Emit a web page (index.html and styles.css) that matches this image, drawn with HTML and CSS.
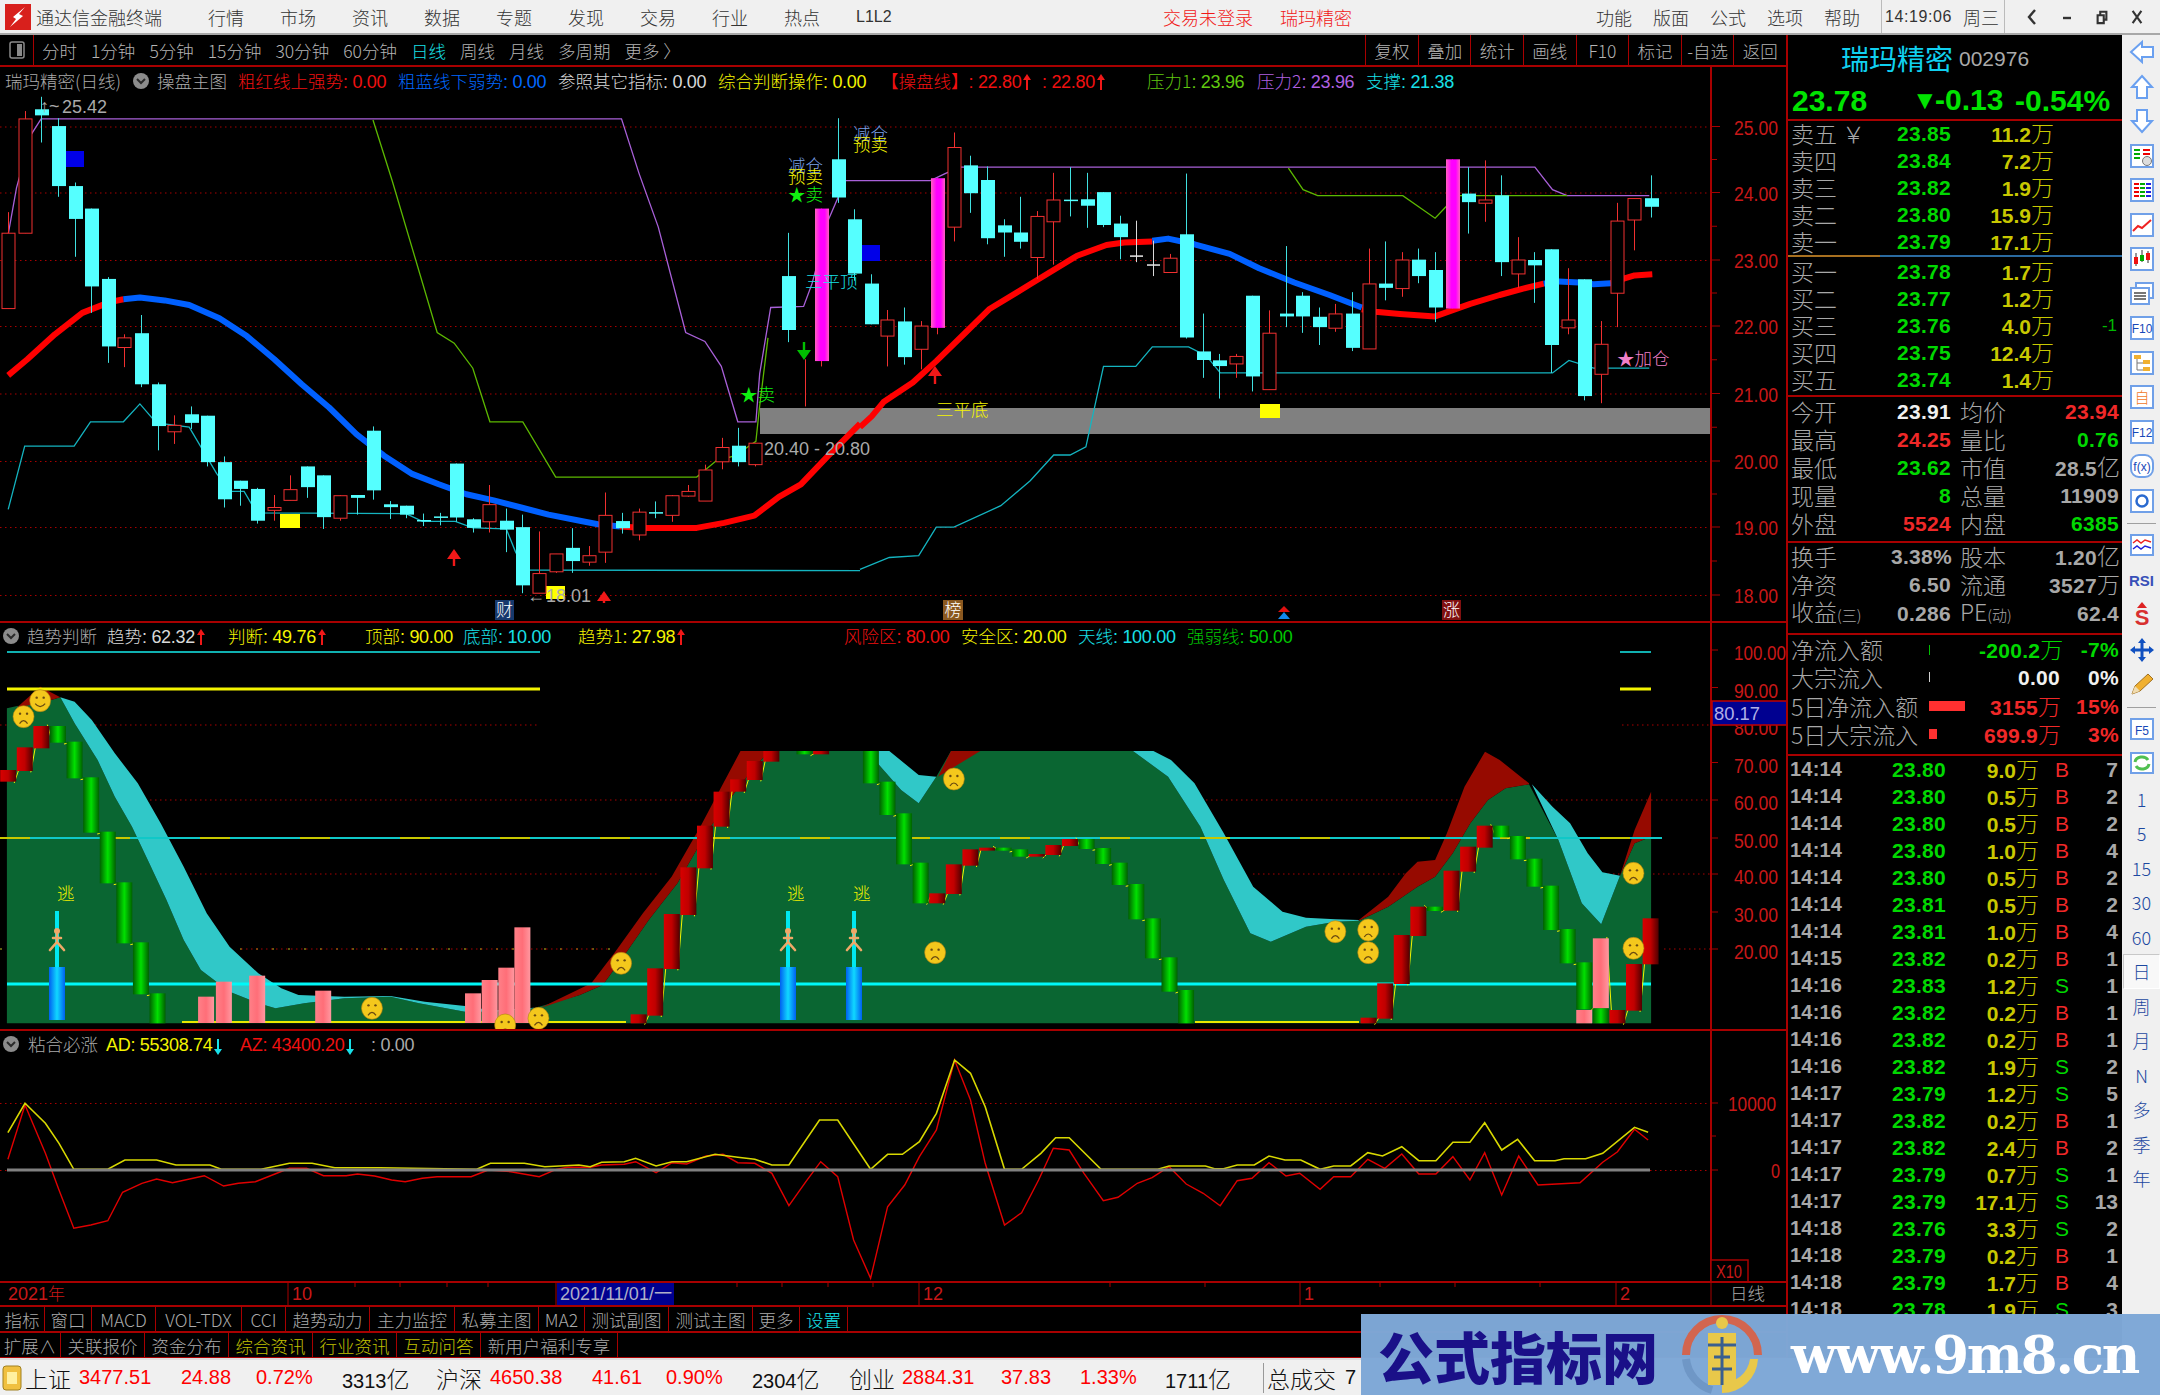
FILE: index.html
```html
<!DOCTYPE html>
<html lang="zh-CN">
<head>
<meta charset="utf-8">
<title>通达信金融终端</title>
<link rel="stylesheet" href="styles.css">
</head>
<body>
<div class="app">
  <header class="titlebar">
    <svg class="logo" viewBox="0 0 26 26"><rect width="26" height="26" fill="#d8201c"/><path d="M20 3 L8 13 L11 15 L5 23 L18 12 L14 10 Z" fill="#fff"/></svg>
    <span class="appname">通达信金融终端</span>
    <nav class="menu">
      <span>行情</span><span>市场</span><span>资讯</span><span>数据</span><span>专题</span><span>发现</span><span>交易</span><span>行业</span><span>热点</span><span class="l12">L1L2</span>
    </nav>
    <span class="alert a1">交易未登录</span>
    <span class="alert a2">瑞玛精密</span>
    <nav class="menu menu-r">
      <span>功能</span><span>版面</span><span>公式</span><span>选项</span><span>帮助</span>
    </nav>
    <div class="clock"><span class="time">14:19:06</span><span>周三</span></div>
    <div class="winbtns">
      <svg viewBox="0 0 14 20"><path d="M10 3 L4 10 L10 17" class="wb"/></svg>
      <svg viewBox="0 0 14 20"><path d="M3 11 H11" class="wb"/></svg>
      <svg viewBox="0 0 16 20"><path d="M3 8 H10 V17 H3 Z M6 8 V4 H13 V13 H10" class="wb"/></svg>
      <svg viewBox="0 0 16 20"><path d="M3 3 L13 17 M13 3 L3 17" class="wb"/></svg>
    </div>
  </header>

  <div class="workspace">
    <div class="left">
      <div class="toolbar">
        <div class="tb-icon"><svg viewBox="0 0 16 18" class="pane-ic"><rect x="1" y="1" width="14" height="16" rx="2"/><rect x="8" y="3" width="5" height="12"/></svg></div>
        <div class="periods">
          <span>分时</span><span>1分钟</span><span>5分钟</span><span>15分钟</span><span>30分钟</span><span>60分钟</span><span class="cy">日线</span><span>周线</span><span>月线</span><span>多周期</span><span>更多 〉</span>
        </div>
        <div class="tb-cells">
          <span>复权</span><span>叠加</span><span>统计</span><span>画线</span><span>F10</span><span>标记</span><span>-自选</span><span>返回</span>
        </div>
      </div>

      <section class="pane pane-main">
        <div class="legend lg-main">
          <span class="gy">瑞玛精密(日线)</span>
          <svg class="chev" viewBox="0 0 16 16"><circle cx="8" cy="8" r="8"/><path d="M4 6 L8 10 L12 6"/></svg>
          <span class="gy">操盘主图</span>
          <span class="rd">粗红线上强势<i>: 0.00</i></span>
          <span class="bl">粗蓝线下弱势<i>: 0.00</i></span>
          <span class="wh">参照其它指标<i>: 0.00</i></span>
          <span class="ye">综合判断操作<i>: 0.00</i></span>
          <span class="rd">【操盘线】<i>: 22.80</i><em></em></span>
          <span class="rd"><i>: 22.80</i><em></em></span>
          <span class="gn">压力1<i>: 23.96</i></span>
          <span class="pu">压力2<i>: 23.96</i></span>
          <span class="cy">支撑<i>: 21.38</i></span>
          <span class="lg-tools">
            <svg viewBox="0 0 16 20" class="pane-ic"><path d="M8 1 L15 10 L8 19 L1 10 Z"/></svg>
            <svg viewBox="0 0 16 18" class="pane-ic"><rect x="1" y="1" width="14" height="16" rx="2"/><rect x="8" y="3" width="5" height="12"/></svg>
          </span>
        </div>
        <svg id="main" viewBox="0 67 1786 554"></svg>
      </section>

      <section class="pane pane-trend">
        <div class="legend lg-trend">
          <svg class="chev" viewBox="0 0 16 16"><circle cx="8" cy="8" r="8"/><path d="M4 6 L8 10 L12 6"/></svg>
          <span class="gy">趋势判断</span>
          <span class="wh">趋势<i>: 62.32</i><em></em></span>
          <span class="ye">判断<i>: 49.76</i><em></em></span>
          <span class="ye">顶部<i>: 90.00</i></span>
          <span class="cy">底部<i>: 10.00</i></span>
          <span class="ye">趋势1<i>: 27.98</i><em></em></span>
          <span class="rd">风险区<i>: 80.00</i></span>
          <span class="ye">安全区<i>: 20.00</i></span>
          <span class="cy">天线<i>: 100.00</i></span>
          <span class="gr">强弱线<i>: 50.00</i></span>
        </div>
        <svg id="trend" viewBox="0 623 1786 406"></svg>
      </section>

      <section class="pane pane-glue">
        <div class="legend lg-glue">
          <svg class="chev" viewBox="0 0 16 16"><circle cx="8" cy="8" r="8"/><path d="M4 6 L8 10 L12 6"/></svg>
          <span class="gy">粘合必涨</span>
          <span class="ye"><i>AD: 55308.74</i><em class="down"></em></span>
          <span class="rd"><i>AZ: 43400.20</i><em class="down"></em></span>
          <span class="gy"><i>: 0.00</i></span>
        </div>
        <svg id="glue" viewBox="0 1031 1786 250"></svg>
      </section>

      <svg id="dates" class="dates" viewBox="0 1283 1786 22"></svg>

      <div class="tabs tabs-a">
        <span>指标</span><span>窗口</span><span>MACD</span><span>VOL-TDX</span><span>CCI</span><span>趋势动力</span><span>主力监控</span><span>私募主图</span><span>MA2</span><span>测试副图</span><span>测试主图</span><span>更多</span><span class="cy">设置</span>
      </div>
      <div class="tabs tabs-b">
        <span>扩展∧</span><span>关联报价</span><span>资金分布</span><span class="oy">综合资讯</span><span class="oy">行业资讯</span><span class="oy">互动问答</span><span>新用户福利专享</span>
      </div>
    </div>

    <aside class="panel">
      <div class="p-title"><span class="p-name">瑞玛精密</span><span class="p-code">002976</span></div>
      <div class="p-price"><span>23.78</span><span><em class="tri">▼</em>-0.13</span><span>-0.54%</span></div>
      <div class="book sep">
        <div class="br"><span>卖五 ￥</span><b>23.85</b><u>11.2<i>万</i></u><s></s></div>
        <div class="br"><span>卖四</span><b>23.84</b><u>7.2<i>万</i></u><s></s></div>
        <div class="br"><span>卖三</span><b>23.82</b><u>1.9<i>万</i></u><s></s></div>
        <div class="br"><span>卖二</span><b>23.80</b><u>15.9<i>万</i></u><s></s></div>
        <div class="br"><span>卖一</span><b>23.79</b><u>17.1<i>万</i></u><s></s></div>
      </div>
      <div class="split"></div>
      <div class="book sep buy">
        <div class="br"><span>买一</span><b>23.78</b><u>1.7<i>万</i></u><s></s></div>
        <div class="br"><span>买二</span><b>23.77</b><u>1.2<i>万</i></u><s></s></div>
        <div class="br"><span>买三</span><b>23.76</b><u>4.0<i>万</i></u><s>-1</s></div>
        <div class="br"><span>买四</span><b>23.75</b><u>12.4<i>万</i></u><s></s></div>
        <div class="br"><span>买五</span><b>23.74</b><u>1.4<i>万</i></u><s></s></div>
      </div>
      <div class="stats sep">
        <div class="sr"><span>今开</span><b class="w">23.91</b><span class="l2">均价</span><b class="r">23.94</b></div>
        <div class="sr"><span>最高</span><b class="r">24.25</b><span class="l2">量比</span><b class="g">0.76</b></div>
        <div class="sr"><span>最低</span><b class="g">23.62</b><span class="l2">市值</span><b class="n">28.5<i>亿</i></b></div>
        <div class="sr"><span>现量</span><b class="g">8</b><span class="l2">总量</span><b class="n">11909</b></div>
        <div class="sr"><span>外盘</span><b class="r">5524</b><span class="l2">内盘</span><b class="g">6385</b></div>
      </div>
      <div class="stats sep s2">
        <div class="sr"><span>换手</span><b class="n">3.38%</b><span class="l2">股本</span><b class="n">1.20<i>亿</i></b></div>
        <div class="sr"><span>净资</span><b class="n">6.50</b><span class="l2">流通</span><b class="n">3527<i>万</i></b></div>
        <div class="sr"><span>收益<small>(三)</small></span><b class="n">0.286</b><span class="l2">PE<small>(动)</small></span><b class="n">62.4</b></div>
      </div>
      <div class="flow sep">
        <div class="fr"><span>净流入额</span><em><q class="tick-g"></q></em><b class="g">-200.2<i>万</i></b><b class="g">-7%</b></div>
        <div class="fr"><span>大宗流入</span><em><q class="tick-w"></q></em><b class="w">0.00</b><b class="w">0%</b></div>
        <div class="fr"><span>5日净流入额</span><em><q class="bar-a"></q></em><b class="r">3155<i>万</i></b><b class="r">15%</b></div>
        <div class="fr"><span>5日大宗流入</span><em><q class="bar-b"></q></em><b class="r">699.9<i>万</i></b><b class="r">3%</b></div>
      </div>
      <div class="ticks">
        <div class="tk"><span>14:14</span><b class="g">23.80</b><u>9.0<i>万</i></u><b class="r bs">B</b><span class="c">7</span></div>
        <div class="tk"><span>14:14</span><b class="g">23.80</b><u>0.5<i>万</i></u><b class="r bs">B</b><span class="c">2</span></div>
        <div class="tk"><span>14:14</span><b class="g">23.80</b><u>0.5<i>万</i></u><b class="r bs">B</b><span class="c">2</span></div>
        <div class="tk"><span>14:14</span><b class="g">23.80</b><u>1.0<i>万</i></u><b class="r bs">B</b><span class="c">4</span></div>
        <div class="tk"><span>14:14</span><b class="g">23.80</b><u>0.5<i>万</i></u><b class="r bs">B</b><span class="c">2</span></div>
        <div class="tk"><span>14:14</span><b class="g">23.81</b><u>0.5<i>万</i></u><b class="r bs">B</b><span class="c">2</span></div>
        <div class="tk"><span>14:14</span><b class="g">23.81</b><u>1.0<i>万</i></u><b class="r bs">B</b><span class="c">4</span></div>
        <div class="tk"><span>14:15</span><b class="g">23.82</b><u>0.2<i>万</i></u><b class="r bs">B</b><span class="c">1</span></div>
        <div class="tk"><span>14:16</span><b class="g">23.83</b><u>1.2<i>万</i></u><b class="g bs">S</b><span class="c">1</span></div>
        <div class="tk"><span>14:16</span><b class="g">23.82</b><u>0.2<i>万</i></u><b class="r bs">B</b><span class="c">1</span></div>
        <div class="tk"><span>14:16</span><b class="g">23.82</b><u>0.2<i>万</i></u><b class="r bs">B</b><span class="c">1</span></div>
        <div class="tk"><span>14:16</span><b class="g">23.82</b><u>1.9<i>万</i></u><b class="g bs">S</b><span class="c">2</span></div>
        <div class="tk"><span>14:17</span><b class="g">23.79</b><u>1.2<i>万</i></u><b class="g bs">S</b><span class="c">5</span></div>
        <div class="tk"><span>14:17</span><b class="g">23.82</b><u>0.2<i>万</i></u><b class="r bs">B</b><span class="c">1</span></div>
        <div class="tk"><span>14:17</span><b class="g">23.82</b><u>2.4<i>万</i></u><b class="r bs">B</b><span class="c">2</span></div>
        <div class="tk"><span>14:17</span><b class="g">23.79</b><u>0.7<i>万</i></u><b class="g bs">S</b><span class="c">1</span></div>
        <div class="tk"><span>14:17</span><b class="g">23.79</b><u>17.1<i>万</i></u><b class="g bs">S</b><span class="c">13</span></div>
        <div class="tk"><span>14:18</span><b class="g">23.76</b><u>3.3<i>万</i></u><b class="g bs">S</b><span class="c">2</span></div>
        <div class="tk"><span>14:18</span><b class="g">23.79</b><u>0.2<i>万</i></u><b class="r bs">B</b><span class="c">1</span></div>
        <div class="tk"><span>14:18</span><b class="g">23.79</b><u>1.7<i>万</i></u><b class="r bs">B</b><span class="c">4</span></div>
        <div class="tk"><span>14:18</span><b class="g">23.78</b><u>1.9<i>万</i></u><b class="g bs">S</b><span class="c">3</span></div>
      </div>
    </aside>

    <aside class="sidebar">
      <div class="si"><svg viewBox="0 0 26 26"><path class="ar" d="M2 13 L13 3 V8 H24 V18 H13 V23 Z"/></svg></div>
      <div class="si"><svg viewBox="0 0 26 26"><path class="ar" d="M13 2 L23 13 H18 V24 H8 V13 H3 Z"/></svg></div>
      <div class="si"><svg viewBox="0 0 26 26"><path class="ar" d="M13 24 L23 13 H18 V2 H8 V13 H3 Z"/></svg></div>
      <div class="si"><svg viewBox="0 0 26 26"><rect class="ib" x="2" y="2" width="22" height="22"/><path d="M5 7 H11 M5 11 H11 M5 15 H11" stroke="#0a0"  stroke-width="2"/><path d="M14 7 H21 M14 11 H21" stroke="#e00" stroke-width="2"/><circle cx="18" cy="18" r="4.5" fill="#ddd" stroke="#777"/></svg></div>
      <div class="si"><svg viewBox="0 0 26 26"><rect class="ib" x="2" y="2" width="22" height="22"/><path d="M5 7 H10 M5 11 H10 M5 15 H10 M5 19 H10" stroke="#e00" stroke-width="2"/><path d="M11 7 H16 M11 11 H16 M11 15 H16 M11 19 H16" stroke="#0a0" stroke-width="2"/><path d="M17 7 H22 M17 11 H22 M17 15 H22 M17 19 H22" stroke="#22d" stroke-width="2"/></svg></div>
      <div class="si"><svg viewBox="0 0 26 26"><rect class="ib" x="2" y="2" width="22" height="22"/><path d="M4 19 L9 14 L13 16 L22 8" fill="none" stroke="#e22" stroke-width="2"/></svg></div>
      <div class="si"><svg viewBox="0 0 26 26"><rect class="ib" x="2" y="2" width="22" height="22"/><path d="M7 7 V20 M13 4 V16 M19 5 V17" stroke="#333"/><rect x="5" y="11" width="4" height="7" fill="#e11"/><rect x="11" y="9" width="4" height="6" fill="#0a0"/><rect x="17" y="7" width="4" height="7" fill="#e11"/></svg></div>
      <div class="si"><svg viewBox="0 0 26 26"><rect class="ib" x="7" y="2" width="17" height="15"/><rect class="ib" x="2" y="7" width="18" height="16"/><path d="M5 12 H17 M5 15 H17 M5 18 H17" stroke="#777" stroke-width="2"/></svg></div>
      <div class="si"><svg viewBox="0 0 26 26"><rect class="ib" x="2" y="2" width="22" height="22"/><text x="13" y="18" class="it">F10</text></svg></div>
      <div class="si"><svg viewBox="0 0 26 26"><rect class="ib" x="2" y="2" width="22" height="22"/><path d="M8 8 V20 H14 M8 13 H14" fill="none" stroke="#777"/><rect x="5" y="5" width="7" height="4" fill="#f0b030"/><rect x="14" y="10" width="7" height="4" fill="#f0b030"/><rect x="14" y="17" width="7" height="4" fill="#f0b030"/></svg></div>
      <div class="si"><svg viewBox="0 0 26 26"><rect class="ib" x="2" y="2" width="22" height="22"/><text x="13" y="19" class="it or">自</text></svg></div>
      <div class="si"><svg viewBox="0 0 26 26"><rect class="ib" x="2" y="2" width="22" height="22"/><text x="13" y="18" class="it">F12</text></svg></div>
      <div class="si"><svg viewBox="0 0 26 26"><rect class="ib" x="2" y="2" width="22" height="22" rx="8"/><text x="13" y="18" class="it">f(x)</text></svg></div>
      <div class="si"><svg viewBox="0 0 26 26"><rect class="ib" x="2" y="2" width="22" height="22"/><circle cx="13" cy="13" r="5.5" fill="none" stroke="#2a6ad0" stroke-width="2.5"/></svg></div>
      <div class="sd"></div>
      <div class="si"><svg viewBox="0 0 26 26"><rect class="ib" x="2" y="2" width="22" height="20"/><path d="M4 10 L8 7 L12 10 L16 7 L22 9" fill="none" stroke="#e22" stroke-width="1.5"/><path d="M4 16 L8 13 L12 16 L16 13 L22 15" fill="none" stroke="#22d" stroke-width="1.5"/></svg></div>
      <div class="si"><span class="rsi">RSI</span></div>
      <div class="si"><svg viewBox="0 0 26 26"><text x="13" y="23" class="it sdl">S</text><path d="M13 0 L18 6 H8 Z" fill="#d22"/></svg></div>
      <div class="si"><svg viewBox="0 0 26 26"><path d="M13 1 L17 6 H9 Z M13 25 L17 20 H9 Z M1 13 L6 9 V17 Z M25 13 L20 9 V17 Z" fill="#1050c0"/><path d="M6 13 H20 M13 6 V20" stroke="#1050c0" stroke-width="3"/></svg></div>
      <div class="si"><svg viewBox="0 0 26 26"><path d="M3 23 L6 15 L19 3 L24 8 L11 20 Z" fill="#f0b030" stroke="#a07020"/><path d="M3 23 L6 15 L11 20 Z" fill="#f0dcb0"/></svg></div>
      <div class="sd"></div>
      <div class="si"><svg viewBox="0 0 26 26"><rect class="ib" x="2" y="2" width="22" height="20"/><text x="13" y="18" class="it">F5</text></svg></div>
      <div class="si"><svg viewBox="0 0 26 26"><rect class="ib" x="2" y="2" width="22" height="20"/><path d="M6 11 A7 6 0 0 1 19 9 M20 13 A7 6 0 0 1 7 15" fill="none" stroke="#50c050" stroke-width="3"/></svg></div>
      <div class="si sn">1</div><div class="si sn">5</div><div class="si sn">15</div><div class="si sn">30</div><div class="si sn">60</div>
      <div class="si sn sel">日</div><div class="si sn">周</div><div class="si sn">月</div><div class="si sn">N</div><div class="si sn">多</div><div class="si sn">季</div><div class="si sn">年</div>
    </aside>
  </div>

  <footer class="statusbar">
    <svg class="st-ic" viewBox="0 0 20 26"><rect x="1" y="1" width="18" height="24" rx="3" fill="#f0c040" stroke="#a08020"/><rect x="5" y="7" width="10" height="12" fill="#fff0a0"/></svg>
    <span>上证</span><b>3477.51</b><b>24.88</b><b>0.72%</b><em>3313<i>亿</i></em>
    <span>沪深</span><b>4650.38</b><b>41.61</b><b>0.90%</b><em>2304<i>亿</i></em>
    <span>创业</span><b>2884.31</b><b>37.83</b><b>1.33%</b><em>1711<i>亿</i></em>
    <span class="st-total">总成交</span><em>7</em>
  </footer>
</div>

<div class="watermark">
  <span class="wm-cn">公式指标网</span>
  <svg class="wm-logo" viewBox="0 0 80 80">
    <path d="M4 40 A36 36 0 0 1 76 40" fill="none" stroke="#d2654f" stroke-width="8"/>
    <path d="M76 44 A36 36 0 0 1 40 78 V66 A24 26 0 0 0 68 44 Z" fill="#e8c84a"/>
    <path d="M4 44 A36 36 0 0 0 30 75" fill="none" stroke="#6f97c6" stroke-width="8"/>
    <path d="M26 18 H54 V70 H26 Z" fill="#e8c84a"/>
    <circle cx="40" cy="8" r="6" fill="#e8c84a"/>
    <path d="M26 30 H54 M32 42 H48 M30 54 H50 M40 22 V70" stroke="#3a5f8f" stroke-width="3"/>
  </svg>
  <span class="wm-url">www.9m8.cn</span>
</div>
<script src="chart.js"></script>
</body>
</html>
```

FILE: styles.css
```css
* { box-sizing: border-box; }
html, body { margin: 0; padding: 0; background: #000; }
body {
  width: 2160px; height: 1395px; overflow: hidden; position: relative;
  font-family: "Noto Sans CJK SC", sans-serif; font-weight: 300;
}
i, em, u, s, q { font-style: normal; text-decoration: none; quotes: none; }
.app { display: flex; flex-direction: column; height: 1395px; }

/* title bar */
.titlebar {
  height: 35px; flex: none; display: flex; align-items: center;
  background: #f0f0f0; border-bottom: 2px solid #a8a8a8; color: #333; font-size: 18px; white-space: nowrap;
}
.logo { width: 26px; height: 26px; margin-left: 5px; flex: none; }
.appname { margin-left: 5px; font-size: 18px; width: 172px; }
.menu { display: flex; gap: 36px; align-items: center; }
.menu span { width: 36px; }
.menu .l12 { font-family: "Liberation Sans", sans-serif; font-size: 16px; }
.alert { color: #f01818; }
.a1 { margin-left: 271px; width: 117px; }
.a2 { width: 100px; }
.menu-r { margin-left: 216px; gap: 21px; }
.clock { margin-left: 21px; width: 124px; height: 33px; display: flex; align-items: center; gap: 12px; padding-left: 3px; border-left: 1px solid #bbb; border-right: 1px solid #bbb; }
.time { font-family: "Liberation Sans", sans-serif; font-size: 16px; letter-spacing: .6px; width: 66px; }
.winbtns { display: flex; gap: 21px; margin-left: 20px; }
.winbtns svg { width: 14px; height: 20px; }
.wb { fill: none; stroke: #333; stroke-width: 2.4; }

/* left column */
.workspace { flex: 1; display: flex; min-height: 0; }
.left { width: 1786px; flex: none; display: flex; flex-direction: column; background: #000; }
.toolbar { height: 32px; flex: none; display: flex; border-bottom: 2px solid #a80000; color: #b4b4b4; font-size: 17.5px; white-space: nowrap; }
.tb-icon { width: 34px; flex: none; display: flex; align-items: center; justify-content: center; border-right: 1px solid #a80000; }
.tb-icon svg { width: 16px; height: 18px; }
.pane-ic { fill: none; stroke: #8a8a8a; stroke-width: 1.5; }
.pane-ic rect + rect { fill: #8a8a8a; stroke: none; }
.periods { display: flex; align-items: center; gap: 14px; margin-left: 8px; }
.tb-cells { margin-left: auto; display: flex; }
.tb-cells span { width: 52.6px; display: flex; align-items: center; justify-content: center; border-left: 1px solid #a80000; }
.cy { color: #18e0e8; }

/* chart panes */
.pane { position: relative; flex: none; border-bottom: 2px solid #a80000; }
.pane svg#main, .pane svg#trend, .pane svg#glue { display: block; width: 1786px; height: 100%; }
.pane-main { height: 556px; }
.pane-trend { height: 408px; }
.pane-glue { height: 252px; }
.legend {
  position: absolute; left: 0; top: 0; height: 24px; display: grid; align-items: center; z-index: 2;
  font-size: 17.5px; white-space: nowrap; color: #aaa;
}
.lg-main { top: 1px; }
.legend i { font-family: "Liberation Sans", sans-serif; font-size: 18px; letter-spacing: -.3px; }
.legend em { display: inline-block; position: relative; width: 2px; height: 14px; margin: 0 3px 0 5px; vertical-align: -2px; background: #f01818; }
.legend em::before { content: ""; position: absolute; left: -3px; top: -2px; border: 4px solid transparent; border-top: 0; border-bottom: 6px solid #f01818; }
.legend em.down { background: #18e0e8; }
.legend em.down::before { top: auto; bottom: -2px; border-bottom: 0; border-top: 6px solid #18e0e8; }
.lg-main { padding-left: 5px; grid-template-columns: 128px 24px 81px 160px 160px 160px 163px 161px 105px 110px 109px 296px; }
.lg-trend { padding-left: 3px; grid-template-columns: 24px 80px 121px 137px 98px 115px 266px 117px 117px 109px auto; }
.lg-glue { padding-left: 3px; grid-template-columns: 25px 78px 134px 131px auto; }
.lg-tools { display: flex; gap: 13px; padding-left: 297px; align-items: center; }
.lg-tools svg { width: 15px; height: 20px; }
.chev { width: 16px; height: 16px; }
.chev circle { fill: #8c8c8c; }
.chev path { fill: none; stroke: #2a2a2a; stroke-width: 2; }
.gy { color: #aaa; }
.rd { color: #f01010; }
.bl { color: #0068ff; }
.wh { color: #d8d8d8; }
.ye { color: #f4f400; }
.gn { color: #60c810; }
.gr { color: #00c800; }
.pu { color: #b060e0; }

/* svg chart parts */
.dot { stroke: #a80000; stroke-width: 1; stroke-dasharray: 1.5 3.5; fill: none; }
.ax { stroke: #a80000; stroke-width: 2; }
.tk-m { stroke: #a80000; stroke-width: 1; }
.axt { fill: #c81818; font-family: "Liberation Sans", sans-serif; font-size: 20px; }
.ln { fill: none; stroke-width: 1.3; }
.ln-pu { stroke: #a860d8; }
.ln-gn { stroke: #5cb800; }
.ln-cy { stroke: #14b4c0; }
.ma { fill: none; stroke-width: 6; stroke-linejoin: round; }
.ma-r { stroke: #ff0000; }
.ma-b { stroke: #0060ff; }
.band { fill: #808080; }
.sq-y { fill: #ffff00; }
.sq-b { fill: #0000e8; }
.wick-r { stroke: #f03030; stroke-width: 1; }
.wick-c { stroke: #40e0e0; stroke-width: 1; }
.wick-w { stroke: #d8d8d8; stroke-width: 1; }
.body-r { fill: #000; stroke: #f03030; stroke-width: 1; }
.body-c { fill: #55ffff; }
.body-w { fill: #e8e8e8; }
.tx { font-family: "Noto Sans CJK SC", sans-serif; font-size: 17.5px; font-weight: 300; }
.tx-y { fill: #f4f400; }
.tx-c { fill: #18e0e8; }
.tx-g { fill: #10f010; }
.tx-b { fill: #7aa0e8; }
.tx-p { fill: #f080c8; }
.tx-n { fill: #aaa; font-family: "Liberation Sans", sans-serif; font-size: 18px; }
.tag { fill: #fff; font-size: 17px; text-anchor: middle; }
.arr-r { fill: #f01818; }
.arr-g { fill: #00c000; }
.ground { fill: #0a6632; }
.b-cy { fill: #30c8c8; }
.b-rd { fill: #960a00; }
.ln-ye { fill: none; stroke: #f4f400; stroke-width: 1; }
.hl-c { stroke: #00f8f8; stroke-width: 3; }
.hl-c2 { stroke: #10b0b0; stroke-width: 2; }
.hl-y { stroke: #f4f400; stroke-width: 3; }
.hl-y2 { stroke: #c8c800; stroke-width: 2; stroke-dasharray: 30 70; }
.hl-m { stroke: #10c8c8; stroke-width: 2; }
.dot-y { stroke: #c0c020; stroke-width: 1; stroke-dasharray: 2 14; }
.base { stroke: #e8e800; stroke-width: 2; }
.st-c { fill: #00e8f0; }
.face { fill: #f4c81c; stroke: #b08010; stroke-width: .6; }
.mouth { fill: none; stroke: #6a4a10; stroke-width: 1.2; }
.eye { fill: #6a4a10; }
.man { fill: none; stroke: #f0a868; stroke-width: 2.6; stroke-linecap: round; }
.head { fill: #f0a868; }
.lbox { fill: #000090; stroke: #c00000; stroke-width: 1.5; }
.ltext { fill: #b0b0e8; font-family: "Liberation Sans", sans-serif; font-size: 19px; }
.g-ye { fill: none; stroke: #d8d800; stroke-width: 1.6; }
.g-rd { fill: none; stroke: #e00000; stroke-width: 1.4; }
.g-zero { stroke: #808080; stroke-width: 3; }
.x10 { fill: #000; stroke: #a80000; stroke-width: 1.5; }

/* date axis */
.dates { display: block; width: 1786px; height: 24px; flex: none; border-bottom: 2px solid #a80000; overflow: visible; }
.dt { fill: #c81818; font-family: "Liberation Sans", sans-serif; font-size: 18px; }
.dt-c { font-family: "Noto Sans CJK SC", sans-serif; font-size: 17px; font-weight: 300; }
.dn { fill: #b0b0c8; font-family: "Liberation Sans", sans-serif; font-size: 18px; }
.dw { fill: #aaa; font-family: "Noto Sans CJK SC", sans-serif; font-size: 17.5px; font-weight: 300; }
.dbox { fill: #000090; }

/* tab strips */
.tabs { display: grid; flex: none; color: #aaa; font-size: 17.5px; border-bottom: 2px solid #a80000; white-space: nowrap; }
.tabs span { display: flex; align-items: center; justify-content: center; border-right: 1px solid #a80000; }
.tabs-a { height: 26px; grid-template-columns: 45px 47px 64px 86px 44px 84px 85px 84px 46px 84px 84px 47px 48px; }
.tabs-b { height: 26px; grid-template-columns: 61px 84px 84px 84px 84px 84px 137px; }
.oy { color: #c0c000; }

/* right panel */
.panel { width: 336px; flex: none; border-left: 2px solid #a80000; background: #000; color: #a8a8a8; font-size: 23px; line-height: 27px; overflow: hidden; white-space: nowrap; }
.panel b { font-family: "Liberation Sans", sans-serif; font-weight: 700; font-size: 21px; letter-spacing: .3px; }
.panel i { font-family: "Noto Sans CJK SC", sans-serif; font-weight: 300; font-size: 23px; letter-spacing: -1px; }
.panel small { font-size: 15px; }
.p-title { height: 46px; display: flex; align-items: center; padding-left: 53px; gap: 6px; }
.p-name { color: #10d0f0; font-size: 28px; font-weight: 400; }
.p-code { font-family: "Liberation Sans", sans-serif; font-size: 21px; color: #aaa; }
.p-price { height: 38px; display: flex; align-items: center; font-family: "Liberation Sans", sans-serif; font-weight: 700; color: #00e400; font-size: 30px; }
.p-price span:nth-child(1) { margin-left: 4px; width: 120px; }
.p-price span:nth-child(2) { width: 103px; }
.tri { display: inline-block; width: 23px; font-size: 26px; vertical-align: 1px; }
.sep { border-top: 2px solid #a80000; }
.split { height: 2px; background: linear-gradient(90deg, #a87020 0 92px, #2a6aa0 92px); }
.book { height: 136px; }
.book .br:first-child { margin-top: -2px; }
.buy { border-top: 0; padding-top: 2px; height: 138px; }
.br { height: 27px; display: grid; grid-template-columns: 100px 60px 102px 1fr; padding-left: 3px; align-items: center; }
.br b { color: #00d800; text-align: right; }
.br u { color: #c8c800; text-align: right; font-family: "Liberation Sans", sans-serif; font-weight: 700; font-size: 21px; }
.br u i { color: #c8c800; }
.br s { color: #00b800; text-align: right; padding-right: 5px; font-family: "Liberation Sans", sans-serif; font-size: 17px; }
.stats { padding: 0 3px; height: 146px; }
.s2 { height: 92px; }
.s2 .sr:first-child { margin-top: -1px; }
.sr { height: 28.2px; display: grid; grid-template-columns: 100px 60px 1fr auto; align-items: center; }
.sr b { text-align: right; }
.l2 { margin-left: 9px; }
.w { color: #f0f0f0; }
.r { color: #f02828; }
.g { color: #00d800; }
.n { color: #a8a8a8; }
.flow { padding: 0 3px; height: 121px; }
.fr { height: 28.3px; display: grid; grid-template-columns: 138px 50px 81px 1fr; align-items: center; }
.fr b { text-align: right; }
.fr em { display: flex; align-items: center; height: 100%; }
.tick-g, .tick-w { display: block; width: 1px; height: 10px; background: #00c000; }
.tick-w { background: #d0d0d0; }
.bar-a { display: block; width: 36px; height: 10px; background: #ff3030; }
.bar-b { display: block; width: 8px; height: 10px; background: #ff3030; }
.ticks { border-top: 2px solid #a80000; height: 600px; padding-left: 2px; }
.tk { height: 27px; display: grid; grid-template-columns: 102px 52px 94px 17px 20px 1fr; align-items: center; }
.tk:first-child { margin-top: -1px; }
.tk span:first-child { font-family: "Liberation Sans", sans-serif; font-weight: 700; font-size: 20px; letter-spacing: .2px; color: #a8a8a8; }
.tk u { color: #c8c800; text-align: right; font-family: "Liberation Sans", sans-serif; font-weight: 700; font-size: 21px; }
.tk u i { color: #c8c800; }
.tk .bs { grid-column: 5; font-weight: 400; }
.tk .c { font-family: "Liberation Sans", sans-serif; font-weight: 700; font-size: 21px; text-align: right; padding-right: 4px; color: #a8a8a8; }

/* sidebar */
.sidebar { width: 38px; flex: none; background: #f0f0f0; display: flex; flex-direction: column; align-items: stretch; padding-left: 1px; }
.si { height: 34.5px; flex: none; display: flex; align-items: center; justify-content: center; }
.si svg { width: 26px; height: 26px; }
.sd { height: 11px; flex: none; display: flex; align-items: center; }
.sd::before { content: ""; display: block; width: 100%; height: 1px; margin: 0 4px; background: #a0a0a0; }
.ar { fill: #fff; stroke: #6aa0f0; stroke-width: 2; }
.ib { fill: #fff; stroke: #70a0e8; stroke-width: 2; }
.it { font-family: "Liberation Sans", sans-serif; font-size: 12px; fill: #1848b8; text-anchor: middle; }
.or { fill: #f07828; font-family: "Noto Sans CJK SC", sans-serif; font-size: 15px; }
.sdl { fill: #d83030; font-weight: 700; font-size: 22px; font-family: "Liberation Sans", sans-serif; }
.rsi { font-family: "Liberation Sans", sans-serif; font-weight: 700; font-size: 15px; color: #3850b8; }
.sn { color: #1c48a0; font-size: 18px; font-family: "Noto Sans CJK SC", sans-serif; }
.sel { background: #f8f8f8; border: 1px solid; border-color: #c8c8c8 #fff #fff #c8c8c8; }

/* status bar */
.statusbar {
  height: 37px; flex: none; display: grid; align-items: center; background: #f0f0f0; border-top: 2px solid #ddd; color: #111; font-size: 23px; white-space: nowrap;
  grid-template-columns: 25px 54px 102px 75px 86px 94px 54px 102px 74px 86px 97px 53px 99px 79px 85px 98px 82px auto;
}
.st-ic { width: 20px; height: 26px; margin-left: 2px; }
.statusbar b { font-family: "Liberation Sans", sans-serif; font-weight: 400; font-size: 20px; color: #f00; }
.statusbar em { font-family: "Liberation Sans", sans-serif; font-size: 20px; color: #111; }
.statusbar em i { font-family: "Noto Sans CJK SC", sans-serif; font-size: 23px; font-weight: 300; }
.st-total { border-left: 1px solid #999; padding-left: 3px; height: 30px; line-height: 30px; }

/* watermark overlay */
.watermark {
  position: absolute; left: 1361px; top: 1314px; width: 799px; height: 81px; background: rgba(126, 168, 214, .985);
  display: flex; align-items: center; overflow: hidden;
}
.wm-cn { margin-left: 17px; width: 304px; color: #1a1088; font-size: 56px; font-weight: 900; line-height: 81px; }
.wm-logo { width: 80px; height: 80px; flex: none; }
.wm-url { margin-left: 29px; color: #fff; font-family: "DejaVu Serif", serif; font-weight: 700; font-size: 53px; line-height: 81px; letter-spacing: -2.2px; }
```

FILE: chart.js
```js
(function () {
  var SP = 16.59, X0 = 8.2;
  function cx(i) { return X0 + SP * i; }
  function mA(x, y) { return [x / 1.823, 70 + y / 2.8]; }
  function mB(x, y) { return [860 + x / 1.704, 70 + y / 2.8]; }
  function tA(x, y) { return [x / 1.742, 620 + y / 3]; }
  function tB(x, y) { return [860 + x / 1.704, 620 + y / 3]; }
  function gA(x, y) { return [x / 0.881, 1030 + y / 3]; }
  function pts(arr, map) {
    var o = [];
    for (var i = 0; i < arr.length; i += 2) {
      var p = map(arr[i], arr[i + 1]);
      o.push(p[0].toFixed(1) + ',' + p[1].toFixed(1));
    }
    return o.join(' ');
  }
  function line(x1, y1, x2, y2, c) { return '<line class="' + c + '" x1="' + x1 + '" y1="' + y1 + '" x2="' + x2 + '" y2="' + y2 + '"/>'; }
  function rect(x, y, w, h, c) { return '<rect class="' + c + '" x="' + x + '" y="' + y + '" width="' + w + '" height="' + h + '"/>'; }
  function text(x, y, s, c, len) { return '<text class="' + c + '" x="' + x + '" y="' + y + '"' + (len ? ' textLength="' + len + '" lengthAdjust="spacingAndGlyphs"' : '') + '>' + s + '</text>'; }
  function pl(arr, map, c) { return '<polyline class="' + c + '" points="' + pts(arr, map) + '"/>'; }
  function pg(s, c, fill) { return '<polygon class="' + (c || '') + '" ' + (fill ? 'fill="' + fill + '" ' : '') + 'points="' + s + '"/>'; }
  function upArrow(x, y1, y2, c) {
    return pg((x) + ',' + y1 + ' ' + (x + 7) + ',' + (y1 + 10) + ' ' + (x + 1.2) + ',' + (y1 + 10) + ' ' + (x + 1.2) + ',' + y2 + ' ' + (x - 1.2) + ',' + y2 + ' ' + (x - 1.2) + ',' + (y1 + 10) + ' ' + (x - 7) + ',' + (y1 + 10), c);
  }

  /* ---------- main price pane ---------- */
  var yz = function (z) { return 70 + z / 2.8; };
  var C = [
    ['r',398,457,668,668],['r',115,137,457,457],['c',75,110,127,203],['c',135,157,325,355],['c',315,325,417,523],
    ['c',388,388,606,680],['c',580,585,774,820],['r',740,750,777,832],['c',686,737,880,888],['c',875,880,997,1065],
    ['r',967,995,1013,1047],['c',942,964,988,1005],['c',968,968,1098,1110],['c',1082,1098,1202,1225],['c',1150,1150,1173,1220],
    ['c',1170,1173,1262,1270],['r',1190,1225,1233,1262],['r',1135,1175,1205,1205],['c',1110,1110,1168,1198],['c',1135,1135,1252,1285],
    ['r',1190,1192,1255,1262],['c',1190,1190,1198,1245],['c',998,1010,1177,1203],['c',1207,1216,1224,1257],['c',1220,1220,1245,1255],
    ['c',1242,1260,1264,1277],['c',1240,1250,1254,1275],['c',1102,1102,1253,1265],['c',1255,1258,1282,1295],['r',1162,1217,1265,1295],
    ['c',1228,1262,1287,1350],['c',1245,1280,1443,1465],['r',1292,1410,1465,1465],['r',1355,1355,1405,1408],['c',1283,1338,1375,1408],
    ['r',1333,1360,1378,1388],['r',1183,1247,1350,1380],['c',1240,1263,1283,1298],['r',1228,1238,1302,1317],['c',1208,1238,1242,1255],
    ['r',1190,1192,1247,1265],['r',1162,1180,1193,1195],['r',1105,1120,1207,1207],['r',1030,1057,1097,1118],['c',1002,1052,1098,1110],
    ['r',1045,1045,1105,1110],null,['c',456,577,728,762],['v',810,0,0,942],['p',388,388,815,830],
    ['c',135,250,357,372],['c',390,418,570,590],['c',572,598,712,712],['r',672,700,745,830],['c',665,704,804,825],
    ['r',703,717,782,838],['p',303,303,722,740],['r',175,217,440,480],['c',240,267,345,400],['c',270,308,471,488],
    ['c',418,435,455,523],['c',355,455,481,500],['r',395,410,525,585],['r',288,364,425,545],['c',272,363,367,410],
    ['c',288,362,380,442],['c',342,342,434,440],['c',408,430,468,530],['w',422,519,521,538],['w',478,544,546,577],
    ['r',515,527,567,567],['c',290,460,749,752],['c',682,788,812,862],['c',795,813,829,920],['r',795,802,823,862],
    ['c',632,632,858,900],['r',673,737,895,895],['c',493,682,690,720],['c',622,632,690,736],['c',665,691,720,770],
    ['r',655,683,723,733],['c',622,682,778,787],['r',500,599,781,781],['c',480,598,610,645],['r',510,532,612,635],
    ['c',500,531,577,597],['c',510,560,665,706],['p',250,250,668,668],['c',272,346,370,458],['r',253,364,373,425],
    ['c',295,351,538,577],['r',468,532,571,610],['c',510,532,547,652],['c',502,502,770,848],['r',555,700,722,740],
    ['c',586,586,913,925],['r',703,768,852,933],['r',372,423,625,720],['r',360,360,420,505],['c',295,359,383,413]
  ];
  var main = '<defs>' +
    '<linearGradient id="gPink" x1="0" x2="1" y1="0" y2="0"><stop offset="0" stop-color="#ff60c0"/><stop offset=".4" stop-color="#ff00ff"/><stop offset=".7" stop-color="#ff00ff"/><stop offset="1" stop-color="#ff60c0"/></linearGradient>' +
    '<linearGradient id="gGreen" x1="0" x2="1" y1="0" y2="0"><stop offset="0" stop-color="#006000"/><stop offset=".5" stop-color="#00e000"/><stop offset="1" stop-color="#006000"/></linearGradient>' +
    '<linearGradient id="gRed" x1="0" x2="1" y1="0" y2="0"><stop offset="0" stop-color="#d80000"/><stop offset=".5" stop-color="#c00000"/><stop offset="1" stop-color="#500000"/></linearGradient>' +
    '<linearGradient id="gSalmon" x1="0" x2="1" y1="0" y2="0"><stop offset="0" stop-color="#ff8088"/><stop offset=".5" stop-color="#ff6e78"/><stop offset="1" stop-color="#ff98a0"/></linearGradient>' +
    '<linearGradient id="gBlue" x1="0" x2="1" y1="0" y2="0"><stop offset="0" stop-color="#0060f0"/><stop offset=".5" stop-color="#10d8ff"/><stop offset="1" stop-color="#0060f0"/></linearGradient>' +
    '</defs>';
  var levels = [25, 24, 23, 22, 21, 20, 19, 18];
  var ly = [126.5, 192.5, 260, 326, 393.5, 461, 527, 595];
  levels.forEach(function (v, k) {
    main += line(0, ly[k] + .5, 1711, ly[k] + .5, 'dot');
    main += line(1711, ly[k], 1720, ly[k], 'tk-m');
    main += text(1734, ly[k] + 8, v.toFixed(2), 'axt', 44);
    if (k < 7) { var h = (ly[k] + ly[k + 1]) / 2; main += line(1711, h, 1717, h, 'tk-m'); }
  });
  main += line(1711, 67, 1711, 622, 'ax');
  main += rect(760, 408, 950, 26, 'band');
  main += pl([15,460,30,330,57,180,75,137,1133,137,1165,290,1200,440,1250,735,1285,760,1315,830,1345,985,1378,985,1385,850,1405,665,1465,662,1480,600,1495,515,1510,420,1527,360,1540,310,1568,310], mA, 'ln ln-pu');
  main += pl([0,310,120,310,145,290,170,272,1150,272,1180,335,1205,352,1345,352], mB, 'ln ln-pu');
  main += pl([680,140,715,310,797,735,828,765,862,835,893,985,953,985,1013,1140,1270,1140,1305,1095,1340,1080,1378,1040,1385,940,1400,750], mA, 'ln ln-gn');
  main += pl([730,275,755,335,780,352,925,352,980,415,1000,380,1020,352,1205,352], mB, 'ln ln-gn');
  main += pl([15,1230,45,1053,135,1053,165,985,225,985,255,935,285,988,345,1000,395,1130,420,1180,445,1180,468,1240,740,1242,770,1264,830,1264,862,1282,923,1285,940,1350,960,1400,1568,1402], mA, 'ln ln-cy');
  main += pl([0,1398,50,1365,100,1360,130,1280,160,1280,240,1220,290,1150,330,1078,358,1078,385,1055,415,830,470,830,498,775,560,775,590,800,614,848,1180,848,1208,813,1250,835,1345,835], mB, 'ln ln-cy');
  main += pl([15,855,50,810,100,740,150,680,200,650,225,642], mA, 'ma ma-r');
  main += pl([225,642,255,637,300,645,345,658,400,695,450,745,500,810,550,880,600,945,650,1020,700,1080,750,1130,800,1160,850,1188,900,1205,950,1225,1000,1245,1050,1260,1090,1272,1130,1278], mA, 'ma ma-b');
  main += pl([1130,1278,1175,1282,1270,1282,1320,1268,1375,1248,1420,1195,1460,1160,1510,1080,1568,990], mA, 'ma ma-r');
  main += pl([0,1000,20,970,40,930,90,875,130,815,180,735,220,670,290,600,370,520,420,490,450,483,498,480], mB, 'ma ma-r');
  main += pl([498,478,525,472,570,488,630,515,680,555,740,595,800,630,855,665], mB, 'ma ma-b');
  main += pl([855,670,878,677,920,683,980,690,1040,655,1090,630,1130,612,1165,598], mB, 'ma ma-r');
  main += pl([1165,598,1190,592,1225,595,1250,600,1280,597], mB, 'ma ma-b');
  main += pl([1280,597,1300,585,1320,575,1350,572], mB, 'ma ma-r');

  main += rect(65, 151, 19, 16, 'sq-b') + rect(860, 245, 20, 16, 'sq-b');
  main += rect(280, 514, 20, 14, 'sq-y') + rect(546, 586, 19, 13, 'sq-y') + rect(1260, 404, 20, 14, 'sq-y');

  C.forEach(function (c, i) {
    if (!c) return;
    var x = Math.round(cx(i)) + .5, t = c[0];
    if (t === 'v') { main += line(x, yz(c[1]), x, yz(c[4]), 'wick-r'); return; }
    var wc = (t === 'r' || t === 'p') ? 'wick-r' : (t === 'w' ? 'wick-w' : 'wick-c');
    main += line(x, yz(c[1]), x, yz(c[4]), wc);
    var y = yz(c[2]), h = Math.max(1.5, yz(c[3]) - y);
    if (t === 'r') main += rect(x - 6.5, y, 13, h, 'body-r');
    else if (t === 'c') main += rect(x - 6.5, y, 14, h, 'body-c');
    else if (t === 'w') main += rect(x - 6.5, y, 13, h, 'body-w');
    else main += '<rect x="' + (x - 6.5) + '" y="' + y + '" width="14" height="' + h + '" fill="url(#gPink)"/>';
  });

  main += text(62, 113, '25.42', 'tx-n') + text(40, 112, '↑~', 'tx-n');
  main += text(527, 602, '←', 'tx-n') + text(546, 602, '18.01', 'tx-n');
  main += text(764, 455, '20.40 - 20.80', 'tx-n');
  main += text(788, 172, '减仓', 'tx tx-b') + text(788, 183, '预卖', 'tx tx-y');
  main += text(853, 140, '减仓', 'tx tx-b') + text(853, 151, '预卖', 'tx tx-y');
  main += text(788, 201, '★卖', 'tx tx-g') + text(740, 401, '★卖', 'tx tx-g');
  main += text(805, 288, '三平顶', 'tx tx-c') + text(936, 416, '三平底', 'tx tx-y');
  main += text(1617, 365, '★加仓', 'tx tx-p');
  main += upArrow(454, 549, 566, 'arr-r') + upArrow(604, 591, 603, 'arr-r') + upArrow(935, 366, 384, 'arr-r');
  main += pg('804,360 811,350 805.2,350 805.2,342 802.8,342 802.8,350 797,350', 'arr-g');
  main += rect(495, 600, 19, 20, '') .replace('class=""', 'fill="#16386c"') + text(504.5, 616, '财', 'tx tag');
  main += rect(943, 600, 20, 20, '').replace('class=""', 'fill="#8a5820"') + text(953, 616, '榜', 'tx tag');
  main += rect(1442, 600, 19, 20, '').replace('class=""', 'fill="#801010"') + text(1451.5, 616, '涨', 'tx tag');
  main += pg('1284,606 1290,612 1278,612', '', '#e01010') + pg('1284,612 1290,619 1278,619', '', '#1088f0');
  document.getElementById('main').innerHTML = main;

  /* ---------- trend pane ---------- */
  var T = '';
  var AX = [[100,650],[90,687.5],[80,725],[70,762.5],[60,800],[50,838],[40,874],[30,912],[20,949]];
  AX.forEach(function (a) {
    T += line(1711, a[1], 1718, a[1], 'tk-m');
    T += text(1734, a[1] + 10, a[0].toFixed(2), 'axt', a[0] === 100 ? 52 : 44);
  });
  T += line(0, 725, 540, 725, 'dot') + line(1622, 725, 1711, 725, 'dot');
  T += line(110, 800, 710, 800, 'dot') + line(1206, 800, 1711, 800, 'dot');
  T += line(190, 874, 660, 874, 'dot') + line(1253, 874, 1711, 874, 'dot');
  T += line(0, 949, 1650, 949, 'dot-y') + line(241, 949, 608, 949, 'dot') + line(1664, 949, 1711, 949, 'dot');

  var gp = pts([12,1210,12,265,30,258,70,250,105,232,130,310,170,420,200,530,230,620,260,730,290,840,320,960,350,1050,400,1115,450,1150,480,1165,530,1150,600,1135,680,1130,730,1150,810,1175,860,1175,930,1165,1010,1125,1050,1095,1090,1000,1130,900,1180,790,1230,640,1270,540,1310,450,1340,393], tA) + ' ' +
    pts([30,393,30,430,70,510,100,550,130,470,155,393,465,393,525,470,580,620,620,780,665,940,700,965,760,920,810,905,850,902,900,860,950,800,980,770,1010,700,1040,610,1070,540,1100,505,1140,493,1190,660,1230,850,1263,913,1295,767,1320,670,1348,650,1348,1210], tB);
  T += pg(gp, 'ground');
  T += pg(pts([105,232,130,245,160,300,200,400,240,490,280,610,320,740,360,880,400,980,450,1060,490,1105,520,1125,600,1130,680,1128,740,1145,810,1158,860,1172,930,1163,930,1165,860,1175,810,1175,730,1150,680,1130,600,1135,530,1150,480,1165,450,1150,400,1115,350,1050,320,960,290,840,260,730,230,620,200,530,170,420,130,310], tA), 'b-cy');
  T += pg(pts([30,262,70,200,105,232,70,250], tA), 'b-rd');
  T += pg(pts([940,1165,1030,1090,1070,1000,1120,880,1170,770,1220,620,1260,490,1290,393,1340,393,1310,450,1270,540,1230,640,1180,790,1130,900,1090,1000,1050,1095,1010,1125], tA), 'b-rd');
  T += pg(pts([30,393,50,393,100,465,130,470,100,550,70,510,30,430], tB), 'b-cy');
  T += pg(pts([133,470,155,393,205,393], tB), 'b-rd');
  T += pg(pts([465,393,500,393,530,420,570,490,620,640,670,800,720,875,760,893,810,898,850,900,850,902,810,905,760,920,700,965,665,940,620,780,580,620,525,470], tB), 'b-cy');
  T += pg(pts([850,900,900,830,930,760,950,725,980,720,1000,640,1030,500,1065,395,1090,420,1140,490,1140,493,1100,505,1070,540,1040,610,1010,700,980,770,950,800,900,860,850,902], tB), 'b-rd');
  T += pg(pts([1145,493,1180,560,1210,610,1240,700,1265,757,1295,767,1263,913,1230,850,1190,660], tB), 'b-cy');
  T += pg(pts([1295,767,1320,630,1348,515,1348,650,1320,670], tB), 'b-rd');

  T += line(7, 984, 1651, 984, 'hl-c');
  T += line(0, 838, 1662, 838, 'hl-m') + line(0, 838, 1662, 838, 'hl-y2');
  T += line(7, 689, 540, 689, 'hl-y') + line(1620, 689, 1651, 689, 'hl-y');
  T += line(7, 652, 540, 652, 'hl-c2') + line(1620, 652, 1651, 652, 'hl-c2');
  T += line(182, 1022, 626, 1022, 'base') + line(1195, 1022, 1359, 1022, 'base');

  /* salmon bars */
  [[359,1130],[390,1085],[448,1067],[563,1112],[824,1120],[853,1080],[882,1043],[910,922]].forEach(function (s) {
    var x = s[0] / 1.742, y = 620 + s[1] / 3;
    T += '<rect x="' + (x - 8) + '" y="' + y + '" width="16" height="' + (1023 - y) + '" fill="url(#gSalmon)"/>';
  });

  /* step blocks */
  var B = {
    0:['r',450,485],1:['r',382,453],2:['r',318,385],3:['g',318,368],4:['g',365,475],5:['g',472,638],6:['g',635,790],7:['g',787,970],8:['g',967,1123],9:['g',1120,1210],
    38:['r',1183,1210],39:['r',1045,1187],40:['r',882,1047],41:['r',742,885],42:['r',617,745],43:['r',515,620],44:['r',478,515],45:['r',423,480],46:['r',393,425],48:['g',393,403],49:['r',393,403],
    52:['g',393,490],53:['g',485,585],54:['g',580,733],55:['g',728,850],56:['r',820,850],57:['r',733,822],58:['r',688,737],59:['r',683,692],60:['g',683,692],61:['g',688,710],62:['r',702,710],63:['r',675,705],64:['r',657,678],65:['g',657,687],66:['g',684,732],67:['g',728,795],68:['g',792,898],69:['g',895,1015],70:['g',1012,1115],71:['g',1110,1210],
    82:['r',1193,1210],83:['r',1090,1196],84:['r',945,1092],85:['r',860,948],86:['g',860,873],87:['r',752,872],88:['r',680,755],89:['r',617,683],90:['g',617,652],91:['g',648,718],92:['g',716,800],93:['g',797,930],94:['g',927,1030],95:['g',1027,1168],96:['s',955,1165],97:['r',1170,1210],98:['r',1032,1172],99:['r',895,1033]
  };
  function ty(z) { return 620 + z / 3; }
  var yl = '';
  Object.keys(B).forEach(function (k) {
    var i = +k, b = B[i], n = B[i + 1];
    if (n) yl += line(cx(i) + 6, ty(b[0] > n[0] ? b[1] - 4 : b[2] + 4) , cx(i + 1) - 6, ty(n[0] !== 0 ? (n[1] > b[1] ? n[1] + 4 : n[2] - 4) : n[1]), 'ln-ye');
  });
  T += yl;
  Object.keys(B).forEach(function (k) {
    var i = +k, b = B[i], x = cx(i) - 8, y = ty(b[1]), h = ty(b[2]) - y;
    var f = b[0] === 'g' ? 'gGreen' : (b[0] === 's' ? 'gSalmon' : 'gRed');
    T += '<rect x="' + x + '" y="' + y + '" width="16" height="' + h + '" fill="url(#' + f + ')"/>';
  });
  T += '<rect x="' + (cx(95) - 8) + '" y="' + ty(1170) + '" width="16" height="' + (ty(1210) - ty(1170)) + '" fill="url(#gSalmon)"/>';
  T += '<rect x="' + (cx(96) - 8) + '" y="' + ty(1165) + '" width="16" height="' + (ty(1210) - ty(1165)) + '" fill="url(#gGreen)"/>';

  /* escape markers */
  [[57, 65], [788, 795], [854, 861]].forEach(function (e) {
    var x = e[0];
    T += rect(x - 2, 911, 4, 56, 'st-c');
    T += '<rect x="' + (x - 8) + '" y="967" width="16" height="53" fill="url(#gBlue)"/>';
    T += '<circle class="head" cx="' + x + '" cy="931" r="3"/>';
    T += '<path class="man" d="M' + x + ' 934 V942 L' + (x + 7) + ' 950 M' + x + ' 942 L' + (x - 7) + ' 950 M' + (x - 4) + ' 938 H' + (x + 4) + '"/>';
    T += text(e[1] - 8, 900, '逃', 'tx tx-y');
  });

  function face(p, happy) {
    var x = p[0], y = p[1], r = 10.5;
    var s = '<ellipse class="face" cx="' + x + '" cy="' + y + '" rx="' + r + '" ry="11"/>';
    s += '<circle class="eye" cx="' + (x - 3.5) + '" cy="' + (y - 3) + '" r="1.2"/><circle class="eye" cx="' + (x + 3.5) + '" cy="' + (y - 3) + '" r="1.2"/>';
    s += happy ? '<path class="mouth" d="M' + (x - 5) + ' ' + (y + 3) + ' Q' + x + ' ' + (y + 9) + ' ' + (x + 5) + ' ' + (y + 3) + '"/>'
      : '<path class="mouth" d="M' + (x - 4) + ' ' + (y + 7) + ' Q' + x + ' ' + (y + 1) + ' ' + (x + 4) + ' ' + (y + 7) + '"/>';
    return s;
  }
  T += face(tA(70, 242), true);
  [[41,290],[648,1165],[880,1215],[938,1195],[1082,1030]].forEach(function (f) { T += face(tA(f[0], f[1])); });
  [[160,477],[128,998],[810,935],[866,930],[866,998],[1318,760],[1318,985]].forEach(function (f) { T += face(tB(f[0], f[1])); });

  T += line(1711, 623, 1711, 1030, 'ax');
  T += rect(1712, 701, 76, 24, 'lbox') + text(1714, 720, '80.17', 'ltext', 46);
  document.getElementById('trend').innerHTML = T;

  /* ---------- glue pane ---------- */
  var G = '';
  G += line(0, 1103.5, 1711, 1103.5, 'dot') + line(0, 1170.5, 1711, 1170.5, 'dot');
  G += line(1711, 1031, 1711, 1282, 'ax');
  G += line(1711, 1103, 1718, 1103, 'tk-m') + line(1711, 1170, 1718, 1170, 'tk-m') + line(1711, 1136, 1716, 1136, 'tk-m');
  G += text(1728, 1111, '10000', 'axt', 48) + text(1771, 1178, '0', 'axt', 9);
  G += pl([7,388,22,225,40,370,52,480,65,595,80,585,95,572,108,487,125,460,138,447,152,458,180,437,197,468,210,460,225,455,255,415,270,415,285,437,305,437,315,432,330,438,345,450,357,455,372,445,385,440,415,440,430,420,450,425,475,440,490,418,500,412,520,412,530,405,550,403,560,395,578,428,592,398,605,402,622,378,637,373,650,398,665,400,680,430,695,527,710,455,723,395,738,440,752,630,767,745,782,530,797,465,810,380,825,300,841,90,855,210,868,400,885,585,900,548,915,450,928,355,942,360,955,430,972,512,985,502,1002,460,1015,443,1030,410,1045,462,1060,490,1075,527,1090,452,1103,445,1118,398,1133,438,1145,430,1163,478,1175,440,1190,440,1205,388,1220,415,1235,372,1250,432,1265,432,1280,380,1295,450,1308,368,1323,495,1338,378,1355,465,1392,458,1412,397,1425,365,1440,298,1452,330], gA, 'g-rd');
  G += pl([7,308,22,220,40,280,52,340,65,418,95,418,110,390,138,390,155,405,185,405,195,418,230,418,255,400,275,400,295,413,335,413,420,418,432,400,462,400,480,410,510,405,520,410,530,397,550,395,560,385,578,408,592,395,605,395,630,373,650,382,665,388,680,405,695,405,722,270,738,270,767,418,782,373,795,373,810,335,825,250,841,90,855,130,868,230,885,418,900,418,917,370,930,323,942,323,970,418,1020,418,1030,408,1062,408,1070,416,1078,416,1090,405,1105,405,1118,378,1132,390,1146,390,1163,418,1175,408,1190,408,1205,368,1218,378,1235,350,1250,392,1265,392,1280,337,1295,337,1308,278,1323,360,1337,328,1352,392,1370,392,1378,386,1397,386,1412,370,1440,292,1452,307], gA, 'g-ye');
  G += line(7, 1170, 1650, 1170, 'g-zero');
  G += rect(1711, 1260, 37, 23, 'x10') + text(1716, 1278, 'X10', 'dt', 26);
  document.getElementById('glue').innerHTML = G;

  /* ---------- date axis ---------- */
  var D = '';
  [288, 556, 919, 1300, 1616, 1711].forEach(function (x) { D += line(x, 1283, x, 1305, 'tk-m'); });
  [355, 400, 447, 488, 737, 782, 828, 873, 1110, 1205, 1380, 1455, 1540].forEach(function (x) { D += line(x, 1283, x, 1287, 'tk-m'); });
  D += rect(557, 1283, 117, 22, 'dbox') + text(560, 1300, '2021/11/01/一', 'dn', 112);
  D += text(8, 1300, '2021', 'dt') + text(48, 1300, '年', 'dt dt-c');
  D += text(292, 1300, '10', 'dt') + text(923, 1300, '12', 'dt') + text(1304, 1300, '1', 'dt') + text(1620, 1300, '2', 'dt');
  D += text(1730, 1300, '日线', 'dw');
  document.getElementById('dates').innerHTML = D;

  /* share gradients between the separate svg roots */
  var defs = document.querySelector('#main defs');
  document.getElementById('trend').insertBefore(defs.cloneNode(true), document.getElementById('trend').firstChild);
})();
```
